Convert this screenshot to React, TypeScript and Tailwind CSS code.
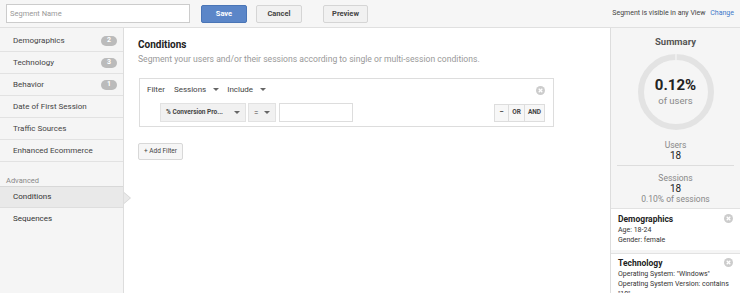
import React from "react";

const Caret = () => (
  <svg width="6" height="3" viewBox="0 0 6 3" className="inline-block">
    <path d="M0 0h6L3 3z" fill="#666" />
  </svg>
);

const CloseIcon = () => (
  <svg width="9" height="9" viewBox="0 0 10 10">
    <circle cx="5" cy="5" r="5" fill="#ccc" />
    <path d="M3 3l4 4M7 3l-4 4" stroke="#fff" strokeWidth="1.4" />
  </svg>
);

const navItems: [string, string | null][] = [
  ["Demographics", "2"],
  ["Technology", "3"],
  ["Behavior", "1"],
  ["Date of First Session", null],
  ["Traffic Sources", null],
  ["Enhanced Ecommerce", null],
];

export default function App() {
  const r = 35;
  return (
    <div
      className="w-[740px] h-[293px] overflow-hidden bg-[#f5f5f5] text-[#333] flex flex-col"
      style={{ fontFamily: "Roboto, 'Liberation Sans', sans-serif" }}
    >
      {/* top bar */}
      <div className="h-[28px] shrink-0 flex items-center border-b border-[#e0e0e0] bg-[#f6f6f6]">
        <div className="ml-[6px] w-[184px] h-[19px] bg-white border border-[#ccc] flex items-center px-[3px] text-[7.5px] text-[#999]">
          Segment Name
        </div>
        <button className="ml-[11px] w-[46px] h-[18px] bg-[#5b86c8] text-white text-[7.5px] font-bold rounded-[2px] border border-[#4a75b6]">
          Save
        </button>
        <button className="ml-[9px] w-[46px] h-[18px] bg-[#f1f1f1] text-[#444] text-[7.5px] font-bold rounded-[2px] border border-[#d5d5d5]">
          Cancel
        </button>
        <button className="ml-[21px] w-[45px] h-[18px] bg-[#f1f1f1] text-[#444] text-[7.5px] font-bold rounded-[2px] border border-[#d5d5d5]">
          Preview
        </button>
        <div className="ml-auto mr-[6px] text-[7px] text-[#444]">
          Segment is visible in any View <span className="ml-[3px] text-[#3b78c9]">Change</span>
        </div>
      </div>

      <div className="flex flex-1 min-h-0">
        {/* sidebar */}
        <div className="w-[124px] shrink-0 border-r border-[#ddd] bg-[#f5f5f5] pt-[2px]">
          {navItems.map(([label, badge]) => (
            <div
              key={label}
              className="h-[22px] border-b border-[#e2e2e2] flex items-center pl-[13px] pr-[6px] text-[8px] text-[#444]"
            >
              <span className="flex-1">{label}</span>
              {badge && (
                <span className="w-[16px] h-[10px] rounded-full bg-[#bbb] text-white text-[7px] font-bold flex items-center justify-center leading-none">
                  {badge}
                </span>
              )}
            </div>
          ))}
          <div className="mt-[13px] pl-[6px] text-[7.5px] text-[#888] h-[11px] leading-[11px]">Advanced</div>
          <div className="relative h-[22px] bg-[#e9e9e9] border-t border-[#d8d8d8] border-b border-b-[#dedede] flex items-center pl-[13px] text-[8px] text-[#333]">
            Conditions
            <div className="absolute right-[-8px] top-[5px] w-0 h-0 border-y-[6px] border-y-transparent border-l-[7px] border-l-[#d5d5d5]" />
            <div className="absolute right-[-7px] top-[6px] w-0 h-0 border-y-[5px] border-y-transparent border-l-[6px] border-l-[#e9e9e9]" />
          </div>
          <div className="h-[22px] flex items-center pl-[13px] text-[8px] text-[#333]">Sequences</div>
        </div>

        {/* main */}
        <div className="flex-1 bg-white pl-[14px] pr-[16px] pt-[10px]">
          <div className="text-[10px] font-bold text-[#222] leading-[14px]">Conditions</div>
          <div className="text-[8.6px] text-[#999] mt-[1px] leading-[12px]">
            Segment your users and/or their sessions according to single or multi-session conditions.
          </div>
          <div className="mt-[13px] ml-[1px] w-[415px] h-[49px] border border-[#ddd] px-[7px] pt-[5px]">
            <div className="flex items-center text-[8px] text-[#444] h-[12px]">
              <span>Filter</span>
              <span className="ml-[9px]">Sessions</span>
              <span className="ml-[7px]"><Caret /></span>
              <span className="ml-[8px]">Include</span>
              <span className="ml-[7px]"><Caret /></span>
              <span className="ml-auto mr-[1px]"><CloseIcon /></span>
            </div>
            <div className="flex items-center mt-[7px] ml-[13px]">
              <div className="w-[86px] h-[19px] bg-[#f1f1f1] border border-[#e2e2e2] flex items-center pl-[5px] pr-[5px] text-[6.5px] font-bold text-[#444] whitespace-nowrap">
                <span className="flex-1">% Conversion Pro...</span>
                <Caret />
              </div>
              <div className="ml-[2px] w-[28px] h-[19px] bg-[#f1f1f1] border border-[#e2e2e2] flex items-center pl-[5px] pr-[5px] text-[8px] text-[#444]">
                <span className="flex-1">=</span>
                <Caret />
              </div>
              <div className="ml-[3px] w-[74px] h-[19px] bg-white border border-[#ddd]" />
              <div className="ml-auto mr-[1px] flex h-[18px] border border-[#ddd] bg-[#f7f7f7] text-[6.5px] font-bold text-[#444]">
                <div className="w-[14px] flex items-center justify-center border-r border-[#ddd]">–</div>
                <div className="w-[16px] flex items-center justify-center border-r border-[#ddd]">OR</div>
                <div className="w-[19px] flex items-center justify-center">AND</div>
              </div>
            </div>
          </div>
          <button className="mt-[16px] w-[45px] h-[17px] bg-[#f6f6f6] border border-[#d8d8d8] rounded-[2px] text-[6.5px] text-[#444]">
            + Add Filter
          </button>
        </div>

        {/* summary */}
        <div className="w-[130px] shrink-0 border-l border-[#ddd] bg-[#f5f5f5]">
          <div className="text-center text-[9.5px] font-bold text-[#555] pt-[8px] leading-[12px]">Summary</div>
          <div className="flex justify-center mt-[4px]">
            <div className="relative w-[80px] h-[80px]">
              <svg width="80" height="80" viewBox="0 0 80 80">
                <circle cx="40" cy="40" r={r} fill="none" stroke="#e3e3e3" strokeWidth="6" />
                <line x1="40" y1="2" x2="40" y2="8" stroke="#fafafa" strokeWidth="1" />
              </svg>
              <div className="absolute inset-0 flex flex-col items-center justify-center">
                <div className="text-[15px] font-bold text-[#222] leading-[17px]">0.12%</div>
                <div className="text-[9.5px] text-[#888] leading-[12px] mt-[1px]">of users</div>
              </div>
            </div>
          </div>
          <div className="text-center mt-[8px]">
            <div className="text-[8.5px] text-[#888] leading-[10px]">Users</div>
            <div className="text-[10px] text-[#222] leading-[11px]">18</div>
          </div>
          <div className="mx-[6px] mt-[4px] border-t border-[#ddd]" />
          <div className="text-center mt-[7px]">
            <div className="text-[8.5px] text-[#888] leading-[10px]">Sessions</div>
            <div className="text-[10px] text-[#222] leading-[11px]">18</div>
            <div className="text-[8.5px] text-[#888] leading-[10px]">0.10% of sessions</div>
          </div>
          <div className="mt-[4px] bg-white border-t border-[#e2e2e2] px-[7px] pt-[5px] pb-[5px] h-[42px]">
            <div className="flex items-start">
              <div className="flex-1 text-[8.5px] font-bold text-[#222] leading-[11px]">Demographics</div>
              <CloseIcon />
            </div>
            <div className="text-[7px] text-[#333] leading-[10px]">Age: 18-24</div>
            <div className="text-[7px] text-[#333] leading-[10px]">Gender: female</div>
          </div>
          <div className="mt-[3px] bg-white border-t border-[#e2e2e2] px-[7px] pt-[4px] pb-[5px]">
            <div className="flex items-start">
              <div className="flex-1 text-[8.5px] font-bold text-[#222] leading-[11px]">Technology</div>
              <CloseIcon />
            </div>
            <div className="text-[7px] text-[#333] leading-[10px]">Operating System: "Windows"</div>
            <div className="text-[7px] text-[#333] leading-[10px]">Operating System Version: contains "10"</div>
          </div>
        </div>
      </div>
    </div>
  );
}
